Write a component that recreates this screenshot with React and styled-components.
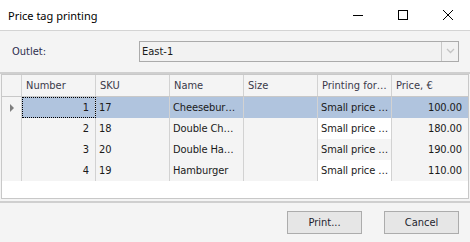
import React from 'react'
import styled, { createGlobalStyle } from 'styled-components'

const GlobalStyle = createGlobalStyle`
    html, body {
        margin: 0;
        padding: 0;
        background: #f4f4f4;
    }
    * {
        box-sizing: border-box;
    }
`

const gridFont = `"DejaVu Sans Condensed", "Liberation Sans", sans-serif`

const columns = '20px repeat(5, 74px) 1fr'

const rows = [
    { number: 1, sku: '17', name: 'Cheesebur…', size: '', printing: 'Small price …', price: '100.00' },
    { number: 2, sku: '18', name: 'Double Ch…', size: '', printing: 'Small price …', price: '180.00' },
    { number: 3, sku: '20', name: 'Double Ha…', size: '', printing: 'Small price …', price: '190.00' },
    { number: 4, sku: '19', name: 'Hamburger', size: '', printing: 'Small price …', price: '110.00' },
]

const App = () => {
    return (
        <>
            <GlobalStyle/>
            <Window>
                <TitleBar>
                    <Title>Price tag printing</Title>
                    <Controls>
                        <ControlButton aria-label="Minimize">
                            <svg width="10" height="10" viewBox="0 0 10 10">
                                <path d="M0 5.5H10" stroke="#000" strokeWidth="1"/>
                            </svg>
                        </ControlButton>
                        <ControlButton aria-label="Maximize">
                            <svg width="10" height="10" viewBox="0 0 10 10">
                                <rect x="0.5" y="0.5" width="9" height="9" fill="none" stroke="#000" strokeWidth="1"/>
                            </svg>
                        </ControlButton>
                        <ControlButton aria-label="Close">
                            <svg width="10" height="10" viewBox="0 0 10 10">
                                <path d="M0 0L10 10M10 0L0 10" stroke="#000" strokeWidth="1"/>
                            </svg>
                        </ControlButton>
                    </Controls>
                </TitleBar>

                <OutletPanel>
                    <Label>Outlet:</Label>
                    <Combo>
                        <ComboText>East-1</ComboText>
                        <ComboButton>
                            <svg width="9" height="6" viewBox="0 0 9 6">
                                <path d="M1 1L4.5 4.5L8 1" fill="none" stroke="#c4c4c4" strokeWidth="1.3"/>
                            </svg>
                        </ComboButton>
                    </Combo>
                </OutletPanel>

                <GridFrame>
                    <HeaderRow>
                        <HeaderCell/>
                        <HeaderCell>Number</HeaderCell>
                        <HeaderCell>SKU</HeaderCell>
                        <HeaderCell>Name</HeaderCell>
                        <HeaderCell>Size</HeaderCell>
                        <HeaderCell>Printing for…</HeaderCell>
                        <HeaderCell $last>Price, €</HeaderCell>
                    </HeaderRow>
                    <Body>
                        {rows.map((row, i) => {
                            const selected = i === 0
                            const even = i % 2 === 1
                            return (
                                <Row key={row.number}>
                                    <Indicator>{selected && <Arrow/>}</Indicator>
                                    <Cell $align="right" $selected={selected} $focused={selected}>{row.number}</Cell>
                                    <Cell $selected={selected}>{row.sku}</Cell>
                                    <Cell $selected={selected}>{row.name}</Cell>
                                    <Cell $selected={selected}>{row.size}</Cell>
                                    <Cell $selected={selected} $white={even}>{row.printing}</Cell>
                                    <Cell $align="right" $selected={selected} $last>{row.price}</Cell>
                                </Row>
                            )
                        })}
                    </Body>
                </GridFrame>

                <Footer>
                    <Button>Print...</Button>
                    <Button>Cancel</Button>
                </Footer>
            </Window>
        </>
    )
}

export default App

const Window = styled.div`
    width: 470px;
    height: 242px;
    display: flex;
    flex-direction: column;
    background: #f4f4f4;
    overflow: hidden;
`

const TitleBar = styled.div`
    height: 31px;
    flex-shrink: 0;
    display: flex;
    align-items: center;
    justify-content: space-between;
    background: #ffffff;
    border-bottom: 1px solid #d4d4d4;
`

const Title = styled.span`
    padding-left: 8px;
    font-family: "Noto Sans", "Open Sans", sans-serif;
    font-size: 11px;
    color: #000;
`

const Controls = styled.div`
    display: flex;
    align-self: stretch;
`

const ControlButton = styled.div`
    width: 45px;
    display: flex;
    align-items: center;
    justify-content: center;
    padding-bottom: 1px;
    svg {
        display: block;
    }
`

const OutletPanel = styled.div`
    height: 43px;
    flex-shrink: 0;
    display: flex;
    align-items: center;
    padding: 0 11px 1px 12px;
    border-bottom: 2px solid #cfcfcf;
`

const Label = styled.span`
    width: 127px;
    font-family: ${gridFont};
    font-size: 11px;
    color: #2e2e4e;
`

const Combo = styled.div`
    flex: 1;
    height: 21px;
    display: flex;
    border: 1px solid #ababab;
    background: #f2f2f2;
`

const ComboText = styled.span`
    flex: 1;
    display: flex;
    align-items: center;
    padding-left: 2px;
    font-family: ${gridFont};
    font-size: 11px;
    color: #1a1a1a;
`

const ComboButton = styled.div`
    width: 17px;
    display: flex;
    align-items: center;
    justify-content: center;
    border-left: 1px solid #c8c8c8;
`

const GridFrame = styled.div`
    margin: 0 1px 2px 1px;
    height: 125px;
    flex-shrink: 0;
    display: flex;
    flex-direction: column;
    border: 1px solid #c8c8c8;
    background: #ffffff;
    font-family: ${gridFont};
    font-size: 11px;
`

const HeaderRow = styled.div`
    display: grid;
    grid-template-columns: ${columns};
    height: 22px;
    background: #f4f4f4;
    border-bottom: 1px solid #c8c8c8;
`

const HeaderCell = styled.div`
    display: flex;
    align-items: center;
    padding-left: 4px;
    color: #3a3a4a;
    white-space: nowrap;
    overflow: hidden;
    border-right: ${p => p.$last ? 'none' : '1px solid #d2d2d2'};
`

const Body = styled.div`
    flex: 1;
    display: flex;
    flex-direction: column;
    background: #ffffff;
`

const Row = styled.div`
    display: grid;
    grid-template-columns: ${columns};
    height: 21px;
`

const Indicator = styled.div`
    display: flex;
    align-items: center;
    padding-left: 8px;
    background: #f4f4f4;
    border-right: 1px solid #d2d2d2;
`

const Arrow = styled.span`
    width: 0;
    height: 0;
    border-top: 4px solid transparent;
    border-bottom: 4px solid transparent;
    border-left: 4px solid #7f7f7f;
`

const Cell = styled.div`
    display: flex;
    align-items: center;
    justify-content: ${p => p.$align === 'right' ? 'flex-end' : 'flex-start'};
    padding: ${p => p.$align === 'right' ? '0 6px 0 0' : '0 0 0 3px'};
    color: #1a1a1a;
    white-space: nowrap;
    overflow: hidden;
    letter-spacing: -0.1px;
    background: ${p => p.$selected ? '#b0c4de' : p.$white ? '#ffffff' : '#f4f4f4'};
    border-right: ${p => p.$last ? 'none' : '1px solid #d2d2d2'};
    outline: ${p => p.$focused ? '1px dotted #000' : 'none'};
    outline-offset: -1px;
`

const Footer = styled.div`
    flex: 1;
    display: flex;
    justify-content: flex-end;
    align-items: flex-start;
    gap: 22px;
    padding: 8px 11px 0 0;
    border-top: 2px solid #cfcfcf;
`

const Button = styled.div`
    width: 75px;
    height: 23px;
    display: flex;
    align-items: center;
    justify-content: center;
    border: 1px solid #acacac;
    background: #e6e6e6;
    font-family: ${gridFont};
    font-size: 11px;
    color: #1e1e2e;
`
